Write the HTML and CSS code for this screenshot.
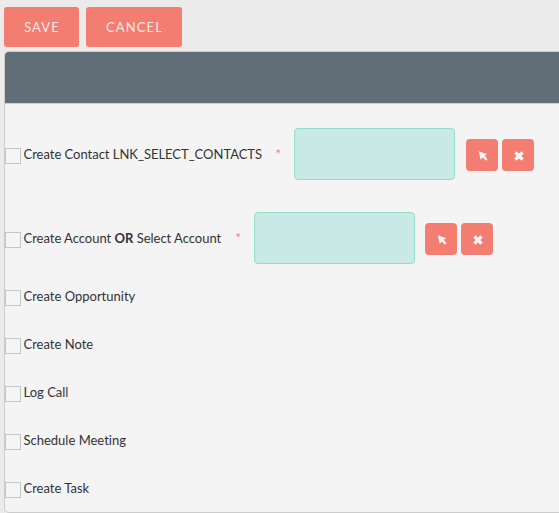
FILE: index.html
```html
<!DOCTYPE html>
<html lang="en">
<head>
<meta charset="utf-8">
<title>Convert Lead</title>
<link rel="stylesheet" href="styles.css">
</head>
<body>
<svg class="symbols" aria-hidden="true">
  <symbol id="arrow" viewBox="0 0 10 10"><path d="M0.8 0.3 9.2 3.2 6.6 4.8 9.5 8.3 8 9.8 4.8 6.6 2.6 8.7Z"/></symbol>
  <symbol id="cross" viewBox="0 0 10 10"><path d="M2.6 0.2 5 2.6 7.4 0.2 9.8 2.6 7.4 5 9.8 7.4 7.4 9.8 5 7.4 2.6 9.8 0.2 7.4 2.6 5 0.2 2.6Z"/></symbol>
</svg>
<form>
  <div class="actions">
    <button type="button" class="button save">SAVE</button>
    <button type="button" class="button cancel">CANCEL</button>
  </div>
  <div class="panel">
    <div class="panel-header"></div>
    <div class="row lookup">
      <input type="checkbox" class="check"><span class="label contact">Create Contact LNK_SELECT_CONTACTS</span>
      <span class="required">*</span>
      <input type="text" class="field">
      <button type="button" class="icon-button"><svg><use href="#arrow"/></svg></button>
      <button type="button" class="icon-button"><svg><use href="#cross"/></svg></button>
    </div>
    <div class="row lookup">
      <input type="checkbox" class="check"><span class="label account">Create Account <b>OR</b> Select Account</span>
      <span class="required">*</span>
      <input type="text" class="field short-gap">
      <button type="button" class="icon-button"><svg><use href="#arrow"/></svg></button>
      <button type="button" class="icon-button"><svg><use href="#cross"/></svg></button>
    </div>
    <div class="row"><input type="checkbox" class="check"><span class="label">Create Opportunity</span></div>
    <div class="row"><input type="checkbox" class="check"><span class="label">Create Note</span></div>
    <div class="row"><input type="checkbox" class="check"><span class="label">Log Call</span></div>
    <div class="row"><input type="checkbox" class="check"><span class="label">Schedule Meeting</span></div>
    <div class="row"><input type="checkbox" class="check"><span class="label">Create Task</span></div>
  </div>
</form>
</body>
</html>
```
FILE: styles.css
```css
* { box-sizing: border-box; }
body {
  margin: 0;
  padding: 7px 0 0 4px;
  background: #ebebeb;
  color: #333;
  font: 13px/20px Lato, sans-serif;
  font-variant-ligatures: none;
  overflow: hidden;
}
.symbols { display: none; }
.actions { display: flex; gap: 7px; margin-bottom: 4px; }
button { border: 0; padding: 0; background: #f47d72; color: #f0e8e8; }
.button {
  height: 40px;
  padding-left: 1px;
  border-radius: 3px;
  font: 13px/40px Lato, sans-serif;
  letter-spacing: 1.1px;
}
.save { width: 75px; }
.cancel { width: 96px; }
.panel {
  height: 462px;
  border: 1px solid #ccc;
  border-right: 0;
  border-radius: 5px 0 0 5px;
  background: #f4f4f4;
  overflow: hidden;
}
.panel-header { height: 52px; background: #616e77; border-bottom: 1px solid #ccc; }
.row { display: flex; align-items: center; height: 48px; }
.lookup { height: 84px; padding-top: 16px; }
.check {
  appearance: none;
  width: 16px;
  height: 16px;
  margin: 4px 2.5px 0 0;
  border: 1px solid #bdc9d1;
  background: #f5f5f5;
}
.label { white-space: nowrap; }
.contact, .account { letter-spacing: -0.02px; }
.contact { width: 252px; }
.account { width: 212px; }
.required { width: 18.5px; color: #f47d72; font-size: 13px; }
.field {
  width: 161px;
  height: 52px;
  margin: 0 11px 0 0;
  border: 1px solid #8fdfcb;
  border-radius: 4px;
  background: #c9eae4;
}
.short-gap { margin-right: 10px; }
.field + .icon-button { margin-right: 4px; }
.icon-button {
  display: grid;
  place-items: center;
  width: 32px;
  height: 32px;
  margin-top: 2px;
  padding: 2px 0 0 2px;
  border-radius: 4px;
}
.icon-button svg { width: 10px; height: 10px; fill: #f5f5f5; }
```
